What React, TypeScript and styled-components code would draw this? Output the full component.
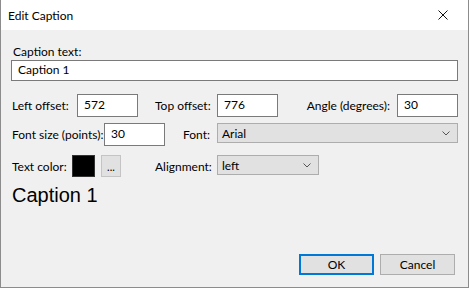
import React from "react";
import styled, { createGlobalStyle } from "styled-components";

const Global = createGlobalStyle`
  html, body { margin: 0; padding: 0; background: #ffffff; }
  * { box-sizing: border-box; }
`;

const uiFont = `"Lato", "Noto Sans", "Liberation Sans", sans-serif`;

const Window = styled.div`
  width: 469px;
  height: 288px;
  display: flex;
  flex-direction: column;
  background: #f0f0f0;
  border: 1px solid #8c8c8c;
  border-top: none;
  font-family: ${uiFont};
  font-size: 12px;
  color: #000;
  overflow: hidden;
`;

const TitleBar = styled.div`
  height: 30px;
  flex: none;
  background: #ffffff;
  display: flex;
  align-items: center;
  justify-content: space-between;
  padding: 0 20px 0 7px;
`;

const Title = styled.span`
  font-size: 12px;
  color: #000;
`;

const CloseButton = styled.span`
  display: flex;
  width: 10px;
  height: 10px;
`;

const Content = styled.div`
  flex: 1;
  padding: 14px 10px 0 10px;
  display: flex;
  flex-direction: column;
`;

const TopLabel = styled.div`
  height: 16px;
  line-height: 16px;
  padding-left: 2px;
`;

const TextInput = styled.input<{ $w?: number; $h?: number }>`
  width: ${(p) => (p.$w ? `${p.$w}px` : "100%")};
  height: ${(p) => p.$h ?? 23}px;
  flex: none;
  margin: 0;
  border: 1px solid #7a7a7a;
  background: #ffffff;
  font-family: ${uiFont};
  font-size: 12px;
  color: #000;
  padding: 0 5px 3px 6px;
  outline: none;
`;

const Row = styled.div<{ $mt: number }>`
  display: flex;
  align-items: center;
  margin-top: ${(p) => p.$mt}px;
  padding-left: 1px;
`;

const LeftGroup = styled.div`
  width: 143px;
  flex: none;
  display: flex;
  align-items: center;
`;

const LeftLabel = styled.span<{ $w: number }>`
  width: ${(p) => p.$w}px;
  flex: none;
  white-space: nowrap;
`;

const MidLabel = styled.span`
  width: 55px;
  flex: none;
  text-align: right;
  margin-right: 7px;
  white-space: nowrap;
`;

const Controls = styled.div`
  flex: 1;
  display: flex;
  align-items: center;
  align-self: stretch;
`;

const SideLabel = styled.span`
  margin-left: auto;
  margin-right: 7px;
  white-space: nowrap;
`;

const SelectBox = styled.div<{ $w?: number }>`
  width: ${(p) => (p.$w ? `${p.$w}px` : "100%")};
  height: 20px;
  align-self: flex-start;
  display: flex;
  align-items: center;
  justify-content: space-between;
  background: #e1e1e1;
  border: 1px solid #adadad;
  padding: 1px 7px 0 4px;
`;

const Chevron = styled.svg`
  width: 8px;
  height: 5px;
  flex: none;
`;

const Swatch = styled.div`
  width: 23px;
  height: 22px;
  flex: none;
  background: #000;
  border: 1px solid #333;
  margin-right: 6px;
`;

const SmallButton = styled.div`
  width: 20px;
  height: 22px;
  flex: none;
  background: #e1e1e1;
  border: 1px solid #c4c4c4;
  display: flex;
  align-items: flex-end;
  justify-content: center;
  font-size: 11px;
  line-height: 14px;
  padding-bottom: 2px;
`;

const Preview = styled.div`
  margin-top: 6px;
  padding-left: 1px;
  font-family: "Liberation Sans", Arial, sans-serif;
  font-size: 20px;
  line-height: 24px;
  color: #000;
`;

const Footer = styled.div`
  flex: none;
  display: flex;
  justify-content: flex-end;
  gap: 6px;
  padding: 0 13px 12px 0;
`;

const DialogButton = styled.button<{ $default?: boolean }>`
  width: 75px;
  height: 21px;
  margin: 0;
  padding: 0;
  background: #e1e1e1;
  border: ${(p) => (p.$default ? "2px solid #0078d7" : "1px solid #adadad")};
  font-family: ${uiFont};
  font-size: 12px;
  color: #000;
`;

const ChevronIcon = () => (
  <Chevron viewBox="0 0 8 5">
    <path d="M0.5 0.5 L4 4 L7.5 0.5" fill="none" stroke="#555" strokeWidth="1" />
  </Chevron>
);

export default function App() {
  return (
    <>
      <Global />
      <Window>
        <TitleBar>
          <Title>Edit Caption</Title>
          <CloseButton>
            <svg width="10" height="10" viewBox="0 0 10 10">
              <path d="M0.5 0.5 L9.5 9.5 M9.5 0.5 L0.5 9.5" stroke="#111" strokeWidth="1" fill="none" />
            </svg>
          </CloseButton>
        </TitleBar>
        <Content>
          <TopLabel>Caption text:</TopLabel>
          <TextInput $h={21} defaultValue="Caption 1" />
          <Row $mt={13}>
            <LeftGroup>
              <LeftLabel $w={65}>Left offset:</LeftLabel>
              <TextInput $w={61} defaultValue="572" />
            </LeftGroup>
            <MidLabel>Top offset:</MidLabel>
            <Controls>
              <TextInput $w={61} defaultValue="776" />
              <SideLabel>Angle (degrees):</SideLabel>
              <TextInput $w={61} defaultValue="30" />
            </Controls>
          </Row>
          <Row $mt={6}>
            <LeftGroup>
              <LeftLabel $w={92}>Font size (points):</LeftLabel>
              <TextInput $w={61} defaultValue="30" />
            </LeftGroup>
            <MidLabel>Font:</MidLabel>
            <Controls>
              <SelectBox>
                <span>Arial</span>
                <ChevronIcon />
              </SelectBox>
            </Controls>
          </Row>
          <Row $mt={9}>
            <LeftGroup>
              <LeftLabel $w={60}>Text color:</LeftLabel>
              <Swatch />
              <SmallButton>...</SmallButton>
            </LeftGroup>
            <MidLabel>Alignment:</MidLabel>
            <Controls>
              <SelectBox $w={102}>
                <span>left</span>
                <ChevronIcon />
              </SelectBox>
            </Controls>
          </Row>
          <Preview>Caption 1</Preview>
        </Content>
        <Footer>
          <DialogButton $default>OK</DialogButton>
          <DialogButton>Cancel</DialogButton>
        </Footer>
      </Window>
    </>
  );
}
